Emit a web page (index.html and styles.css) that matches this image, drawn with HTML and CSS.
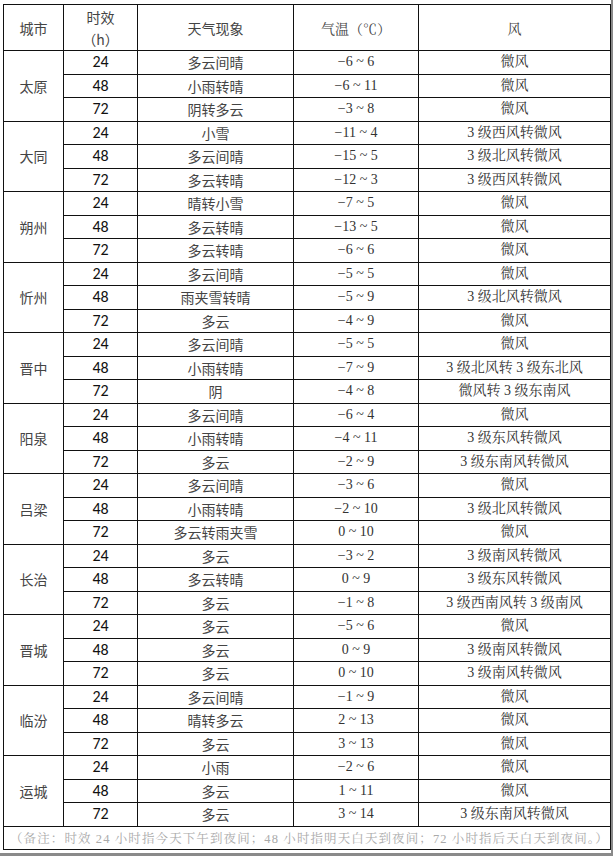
FILE: index.html
```html
<!DOCTYPE html>
<html lang="zh">
<head>
<meta charset="utf-8">
<link rel="stylesheet" href="styles.css">
</head>
<body>
<div class="page">
<table class="wx">
<colgroup>
<col class="c-city"><col class="c-h"><col class="c-wx"><col class="c-t"><col class="c-w">
</colgroup>
<thead>
<tr class="head">
<th class="sans">城市</th>
<th class="sans">时效<br>（h）</th>
<th class="sans">天气现象</th>
<th class="serif">气温（℃）</th>
<th class="serif">风</th>
</tr>
</thead>
<tbody>
<tr><td rowspan="3" class="city">太原</td><td class="h">24</td><td class="wx">多云间晴</td><td class="t">−6 ~ 6</td><td class="w">微风</td></tr>
<tr><td class="h">48</td><td class="wx">小雨转晴</td><td class="t">−6 ~ 11</td><td class="w">微风</td></tr>
<tr><td class="h">72</td><td class="wx">阴转多云</td><td class="t">−3 ~ 8</td><td class="w">微风</td></tr>

<tr><td rowspan="3" class="city">大同</td><td class="h">24</td><td class="wx">小雪</td><td class="t">−11 ~ 4</td><td class="w">3 级西风转微风</td></tr>
<tr><td class="h">48</td><td class="wx">多云间晴</td><td class="t">−15 ~ 5</td><td class="w">3 级北风转微风</td></tr>
<tr><td class="h">72</td><td class="wx">多云转晴</td><td class="t">−12 ~ 3</td><td class="w">3 级西风转微风</td></tr>

<tr><td rowspan="3" class="city">朔州</td><td class="h">24</td><td class="wx">晴转小雪</td><td class="t">−7 ~ 5</td><td class="w">微风</td></tr>
<tr><td class="h">48</td><td class="wx">多云转晴</td><td class="t">−13 ~ 5</td><td class="w">微风</td></tr>
<tr><td class="h">72</td><td class="wx">多云转晴</td><td class="t">−6 ~ 6</td><td class="w">微风</td></tr>

<tr><td rowspan="3" class="city">忻州</td><td class="h">24</td><td class="wx">多云间晴</td><td class="t">−5 ~ 5</td><td class="w">微风</td></tr>
<tr><td class="h">48</td><td class="wx">雨夹雪转晴</td><td class="t">−5 ~ 9</td><td class="w">3 级北风转微风</td></tr>
<tr><td class="h">72</td><td class="wx">多云</td><td class="t">−4 ~ 9</td><td class="w">微风</td></tr>

<tr><td rowspan="3" class="city">晋中</td><td class="h">24</td><td class="wx">多云间晴</td><td class="t">−5 ~ 5</td><td class="w">微风</td></tr>
<tr><td class="h">48</td><td class="wx">小雨转晴</td><td class="t">−7 ~ 9</td><td class="w">3 级北风转 3 级东北风</td></tr>
<tr><td class="h">72</td><td class="wx">阴</td><td class="t">−4 ~ 8</td><td class="w">微风转 3 级东南风</td></tr>

<tr><td rowspan="3" class="city">阳泉</td><td class="h">24</td><td class="wx">多云间晴</td><td class="t">−6 ~ 4</td><td class="w">微风</td></tr>
<tr><td class="h">48</td><td class="wx">小雨转晴</td><td class="t">−4 ~ 11</td><td class="w">3 级东风转微风</td></tr>
<tr><td class="h">72</td><td class="wx">多云</td><td class="t">−2 ~ 9</td><td class="w">3 级东南风转微风</td></tr>

<tr><td rowspan="3" class="city">吕梁</td><td class="h">24</td><td class="wx">多云间晴</td><td class="t">−3 ~ 6</td><td class="w">微风</td></tr>
<tr><td class="h">48</td><td class="wx">小雨转晴</td><td class="t">−2 ~ 10</td><td class="w">3 级北风转微风</td></tr>
<tr><td class="h">72</td><td class="wx">多云转雨夹雪</td><td class="t">0 ~ 10</td><td class="w">微风</td></tr>

<tr><td rowspan="3" class="city">长治</td><td class="h">24</td><td class="wx">多云</td><td class="t">−3 ~ 2</td><td class="w">3 级南风转微风</td></tr>
<tr><td class="h">48</td><td class="wx">多云转晴</td><td class="t">0 ~ 9</td><td class="w">3 级东风转微风</td></tr>
<tr><td class="h">72</td><td class="wx">多云</td><td class="t">−1 ~ 8</td><td class="w">3 级西南风转 3 级南风</td></tr>

<tr><td rowspan="3" class="city">晋城</td><td class="h">24</td><td class="wx">多云</td><td class="t">−5 ~ 6</td><td class="w">微风</td></tr>
<tr><td class="h">48</td><td class="wx">多云</td><td class="t">0 ~ 9</td><td class="w">3 级南风转微风</td></tr>
<tr><td class="h">72</td><td class="wx">多云</td><td class="t">0 ~ 10</td><td class="w">3 级南风转微风</td></tr>

<tr><td rowspan="3" class="city">临汾</td><td class="h">24</td><td class="wx">多云间晴</td><td class="t">−1 ~ 9</td><td class="w">微风</td></tr>
<tr><td class="h">48</td><td class="wx">晴转多云</td><td class="t">2 ~ 13</td><td class="w">微风</td></tr>
<tr><td class="h">72</td><td class="wx">多云</td><td class="t">3 ~ 13</td><td class="w">微风</td></tr>

<tr><td rowspan="3" class="city">运城</td><td class="h">24</td><td class="wx">小雨</td><td class="t">−2 ~ 6</td><td class="w">微风</td></tr>
<tr><td class="h">48</td><td class="wx">多云</td><td class="t">1 ~ 11</td><td class="w">微风</td></tr>
<tr><td class="h">72</td><td class="wx">多云</td><td class="t">3 ~ 14</td><td class="w">3 级东南风转微风</td></tr>

<tr class="foot"><td colspan="5">（备注：时效 24 小时指今天下午到夜间；48 小时指明天白天到夜间；72 小时指后天白天到夜间。）</td></tr>
</tbody>
</table>
</div>
</body>
</html>
```

FILE: styles.css
```css
html, body {
  margin: 0;
  padding: 0;
  background: #fff;
}

.page {
  width: 613px;
  height: 856px;
  padding: 4px 0 0 3px;
  box-sizing: border-box;
  border-right: 2px solid #8a8a8a;
  border-bottom: 3px solid #8a8a8a;
}

.wx {
  border-collapse: collapse;
  table-layout: fixed;
  width: 607px;
}

.c-city { width: 60px; }
.c-h { width: 74px; }
.c-wx { width: 156px; }
.c-t { width: 125px; }
.c-w { width: 192px; }

.wx th, .wx td {
  border: 1.5px solid #111;
  padding: 0;
  text-align: center;
  vertical-align: middle;
  font-weight: normal;
  white-space: nowrap;
  overflow: hidden;
}

.wx tbody tr { height: 23.5px; }

.head { height: 46px; }

.sans {
  font-family: "Noto Sans CJK SC", sans-serif;
  font-size: 14px;
  color: #444;
  line-height: 22px;
}

.serif {
  font-family: "Liberation Serif", "Noto Serif CJK SC", "Noto Sans CJK SC", serif;
  font-size: 14px;
  color: #444;
}

.city {
  font-family: "Noto Sans CJK SC", sans-serif;
  font-size: 14px;
  color: #444;
}

.h {
  font-family: Carlito, "Open Sans", "Noto Sans", sans-serif;
  font-size: 16px;
  color: #111;
  line-height: 20px;
}

td.wx {
  font-family: "Noto Sans CJK SC", sans-serif;
  font-size: 14px;
  color: #444;
  line-height: 20px;
}

.t {
  font-family: "Liberation Serif", serif;
  font-size: 14px;
  color: #333;
  line-height: 20px;
}

.w {
  font-family: "Liberation Serif", "Noto Serif CJK SC", "Noto Sans CJK SC", serif;
  font-size: 14px;
  color: #333;
  line-height: 20px;
}

.foot { height: 24px; }

.foot td {
  font-family: "Liberation Serif", "Noto Serif CJK SC", "Noto Sans CJK SC", serif;
  font-size: 12.5px;
  letter-spacing: 1.1px;
  color: #aaa;
  text-align: left;
  padding-left: 6px;
}
```
